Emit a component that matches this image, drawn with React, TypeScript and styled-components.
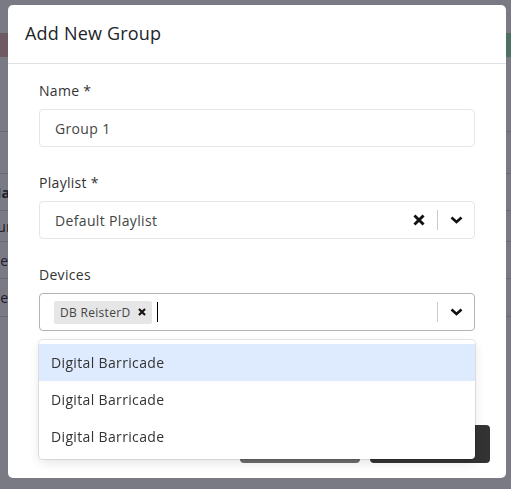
import React from 'react'
import styled, { createGlobalStyle } from 'styled-components'

const GlobalStyle = createGlobalStyle`
  * { box-sizing: border-box; }
  html, body { margin: 0; padding: 0; }
  body {
    font-family: 'Open Sans', 'Liberation Sans', sans-serif;
    background: #ffffff;
    width: 511px;
    height: 489px;
    overflow: hidden;
  }
`

// page behind the modal (mostly hidden)
const Page = styled.div`
  padding-top: 33px;
  width: 511px;
`

const TopBar = styled.div`
  height: 24px;
  display: flex;
  justify-content: space-between;
`

const BarPart = styled.div<{ $color: string }>`
  width: 240px;
  background: ${p => p.$color};
`

const Table = styled.div`
  margin-top: 50px;
  display: flex;
  flex-direction: column;
`

const Row = styled.div<{ $h: number; $bold?: boolean }>`
  height: ${p => p.$h}px;
  border-bottom: 1px solid #d9d9e6;
  display: flex;
  align-items: center;
  font-size: 14px;
  color: #333;
  font-weight: ${p => (p.$bold ? 700 : 400)};
  text-indent: -10px;
`

const Backdrop = styled.div`
  position: fixed;
  inset: 0;
  background: rgba(13, 13, 33, 0.55);
  padding: 5px 5px 0 8px;
`

const Modal = styled.div`
  width: 498px;
  height: 473px;
  background: #fff;
  border-radius: 5px;
  display: flex;
  flex-direction: column;
  position: relative;
`

const Header = styled.div`
  height: 59px;
  border-bottom: 1px solid #dee2e6;
  display: flex;
  align-items: center;
  padding: 0 17px 2px;
`

const Title = styled.h5`
  margin: 0;
  font-size: 18px;
  font-weight: 500;
  letter-spacing: 0.2px;
  color: #212529;
`

const Body = styled.div`
  padding: 16px 31px 0;
`

const Group = styled.div`
  margin-bottom: 25px;
  position: relative;
`

const Label = styled.div`
  font-size: 14px;
  line-height: 21px;
  letter-spacing: 0.3px;
  color: #333;
  margin-bottom: 8px;
`

const Control = styled.div<{ $focused?: boolean }>`
  height: 38px;
  border: 1px solid ${p => (p.$focused ? '#b3b3b3' : '#e6e6e6')};
  border-radius: 4px;
  display: flex;
  align-items: center;
  padding-left: 15px;
  font-size: 14px;
  letter-spacing: 0.35px;
  color: #444;
`

const Value = styled.div`
  flex: 1;
  display: flex;
  align-items: center;
`

const MultiValues = styled.div`
  flex: 1;
  display: flex;
  align-items: center;
  margin-left: -1px;
`

const Chip = styled.div`
  display: flex;
  align-items: center;
  height: 23px;
  background: #e6e6e6;
  border-radius: 2px;
  padding: 0 6px;
  font-size: 12px;
  letter-spacing: 0.3px;
  color: #444;
  gap: 8px;
`

const Caret = styled.div`
  width: 1px;
  height: 20px;
  background: #000;
  margin-left: 5px;
`

const Indicators = styled.div`
  display: flex;
  align-items: center;
  height: 100%;
`

const IconBox = styled.div`
  width: 36px;
  display: flex;
  align-items: center;
  justify-content: center;
`

const Separator = styled.div`
  width: 1px;
  height: 20px;
  background: #cccccc;
`

const Footer = styled.div`
  margin-top: auto;
  padding: 0 16px 15px;
  display: flex;
  justify-content: flex-end;
  gap: 10px;
`

const Button = styled.button<{ $dark?: boolean }>`
  width: 120px;
  height: 38px;
  border: none;
  border-radius: 4px;
  background: ${p => (p.$dark ? '#333333' : '#6c6c6c')};
  color: #fff;
  font-family: inherit;
  font-size: 14px;
`

const Menu = styled.div`
  position: absolute;
  left: 0;
  right: 0;
  top: calc(100% + 9px);
  background: #fff;
  border-radius: 4px;
  box-shadow: 0 0 0 1px rgba(0, 0, 0, 0.1), 0 4px 11px rgba(0, 0, 0, 0.1);
  padding: 4px 0;
  z-index: 2;
`

const Option = styled.div<{ $active?: boolean }>`
  height: 37px;
  display: flex;
  align-items: center;
  padding-left: 12px;
  font-size: 14px;
  letter-spacing: 0.35px;
  color: #333;
  background: ${p => (p.$active ? '#deebff' : 'transparent')};
`

const Cross = ({ size = 12, w = 2.4 }: { size?: number; w?: number }) => (
  <svg width={size} height={size} viewBox="0 0 10 10">
    <path d="M1.2 1.2 L8.8 8.8 M8.8 1.2 L1.2 8.8" stroke="#111" strokeWidth={w} fill="none" />
  </svg>
)

const Chevron = () => (
  <svg width="13" height="8" viewBox="0 0 13 8">
    <path d="M1.5 1.5 L6.5 6 L11.5 1.5" stroke="#111" strokeWidth="2.6" fill="none" />
  </svg>
)

const App: React.FC = () => {
  const options = ['Digital Barricade', 'Digital Barricade', 'Digital Barricade']

  return (
    <>
      <GlobalStyle />
      <Page>
        <TopBar>
          <BarPart $color="#e2b9b2" />
          <BarPart $color="#9de8b4" />
        </TopBar>
        <Table>
          <Row $h={25}> </Row>
          <Row $h={42}> </Row>
          <Row $h={37} $bold>Name</Row>
          <Row $h={31}>Lumen</Row>
          <Row $h={37}>Devices</Row>
          <Row $h={38}>Devices</Row>
        </Table>
      </Page>
      <Backdrop>
        <Modal>
          <Header>
            <Title>Add New Group</Title>
          </Header>
          <Body>
            <Group>
              <Label>Name *</Label>
              <Control>
                <Value>Group 1</Value>
              </Control>
            </Group>
            <Group>
              <Label>Playlist *</Label>
              <Control>
                <Value>Default Playlist</Value>
                <Indicators>
                  <IconBox><Cross /></IconBox>
                  <Separator />
                  <IconBox><Chevron /></IconBox>
                </Indicators>
              </Control>
            </Group>
            <Group>
              <Label>Devices</Label>
              <Control $focused>
                <MultiValues>
                  <Chip>
                    DB ReisterD
                    <Cross size={8} w={2.6} />
                  </Chip>
                  <Caret />
                </MultiValues>
                <Indicators>
                  <Separator />
                  <IconBox><Chevron /></IconBox>
                </Indicators>
              </Control>
              <Menu>
                {options.map((o, i) => (
                  <Option key={i} $active={i === 0}>{o}</Option>
                ))}
              </Menu>
            </Group>
          </Body>
          <Footer>
            <Button>Cancel</Button>
            <Button $dark>Save</Button>
          </Footer>
        </Modal>
      </Backdrop>
    </>
  )
}

export default App
